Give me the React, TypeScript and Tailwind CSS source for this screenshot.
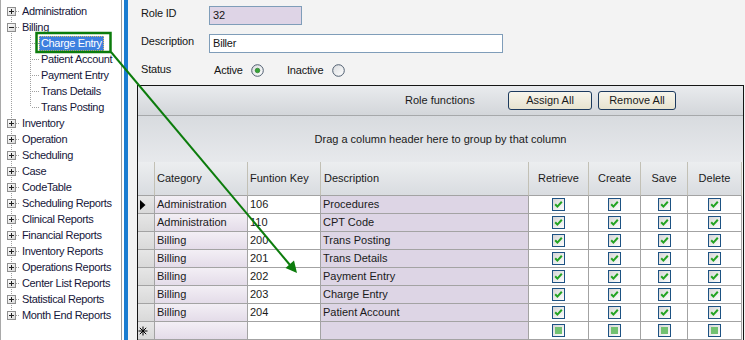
import React from "react";

type Root = { label: string; children?: string[] };

const roots: Root[] = [
  { label: "Administration" },
  {
    label: "Billing",
    children: ["Charge Entry", "Patient Account", "Payment Entry", "Trans Details", "Trans Posting"],
  },
  { label: "Inventory" },
  { label: "Operation" },
  { label: "Scheduling" },
  { label: "Case" },
  { label: "CodeTable" },
  { label: "Scheduling Reports" },
  { label: "Clinical Reports" },
  { label: "Financial Reports" },
  { label: "Inventory Reports" },
  { label: "Operations Reports" },
  { label: "Center List Reports" },
  { label: "Statistical Reports" },
  { label: "Month End Reports" },
];

const DOT = { stroke: "#a0a0a0", strokeDasharray: "1 1", shapeRendering: "crispEdges" as const };

function RootGutter({ first, last, expanded }: { first: boolean; last: boolean; expanded: boolean }) {
  return (
    <svg width={19} height={16} className="shrink-0">
      <defs>
        <linearGradient id="pbox" x1="0" y1="0" x2="1" y2="1">
          <stop offset="0" stopColor="#ffffff" />
          <stop offset="1" stopColor="#d6d6d6" />
        </linearGradient>
      </defs>
      <line x1={10.5} y1={first ? 8 : 0} x2={10.5} y2={last ? 8 : 16} {...DOT} />
      <line x1={15} y1={8.5} x2={19} y2={8.5} {...DOT} />
      <rect x={6.5} y={4.5} width={8} height={8} fill="url(#pbox)" stroke="#8f8f8f" shapeRendering="crispEdges" />
      <line x1={8} y1={8.5} x2={13} y2={8.5} stroke="#222" shapeRendering="crispEdges" />
      {!expanded && <line x1={10.5} y1={6} x2={10.5} y2={11} stroke="#222" shapeRendering="crispEdges" />}
    </svg>
  );
}

function ChildGutter({ last }: { last: boolean }) {
  return (
    <svg width={38} height={16} className="shrink-0">
      <line x1={10.5} y1={0} x2={10.5} y2={16} {...DOT} />
      <line x1={29.5} y1={0} x2={29.5} y2={last ? 8 : 16} {...DOT} />
      <line x1={31} y1={8.5} x2={38} y2={8.5} {...DOT} />
    </svg>
  );
}

function Tree() {
  return (
    <div className="w-[122px] shrink-0 bg-white border-l border-r border-l-[#a9a9a9] border-r-[#9c9c9c] pt-[3px] text-[#16163a] tracking-[-0.35px]">
      {roots.map((r, i) => (
        <React.Fragment key={r.label}>
          <div className="flex items-center h-[16px] whitespace-nowrap">
            <RootGutter first={i === 0} last={i === roots.length - 1} expanded={!!r.children} />
            <span className="h-[15px] leading-[13px] border border-transparent px-[1px]">{r.label}</span>
          </div>
          {r.children?.map((c, j) => (
            <div key={c} className="flex items-center h-[16px] whitespace-nowrap">
              <ChildGutter last={j === r.children!.length - 1} />
              {j === 0 ? (
                <span className="h-[15px] leading-[13px] border border-dotted border-[#e2bf6a] bg-[#3d80df] text-white px-[1px]">
                  {c}
                </span>
              ) : (
                <span className="h-[15px] leading-[13px] border border-transparent px-[1px]">{c}</span>
              )}
            </div>
          ))}
        </React.Fragment>
      ))}
    </div>
  );
}

function Radio({ checked }: { checked?: boolean }) {
  return (
    <svg width={13} height={13} className="shrink-0">
      <defs>
        <linearGradient id="rbg" x1="0" y1="0" x2="1" y2="1">
          <stop offset="0" stopColor="#d9dbde" />
          <stop offset="1" stopColor="#ffffff" />
        </linearGradient>
      </defs>
      <circle cx={6.5} cy={6.5} r={5.8} fill="url(#rbg)" stroke="#4f5e70" />
      {checked && <circle cx={6.5} cy={6.5} r={2.3} fill="#36a336" stroke="#1e6e1e" strokeWidth={0.6} />}
    </svg>
  );
}

function Form() {
  return (
    <div className="pt-[6px] tracking-[-0.2px]">
      <div className="flex items-center h-[19px]">
        <span className="w-[81px] pl-[13px] mb-[4px]">Role ID</span>
        <div className="w-[93px] h-[19px] border border-[#7f9db9] bg-[#ded4e6] pl-[3px] leading-[17px]">32</div>
      </div>
      <div className="flex items-center h-[19px] mt-[9px]">
        <span className="w-[81px] pl-[13px] mb-[4px]">Description</span>
        <div className="w-[294px] h-[19px] border border-[#7f9db9] bg-white pl-[3px] leading-[17px]">Biller</div>
      </div>
      <div className="flex items-center h-[14px] mt-[10px]">
        <span className="w-[86px] pl-[13px] mb-[2px]">Status</span>
        <span className="w-[37px]">Active</span>
        <Radio checked />
        <span className="w-[23px]" />
        <span className="w-[45px]">Inactive</span>
        <Radio />
      </div>
    </div>
  );
}

function CheckBox({ empty }: { empty?: boolean }) {
  return (
    <svg width={13} height={13} className="shrink-0">
      <defs>
        <linearGradient id="cbg" x1="0" y1="0" x2="1" y2="1">
          <stop offset="0" stopColor="#d4d4d4" />
          <stop offset="1" stopColor="#ffffff" />
        </linearGradient>
      </defs>
      <rect x={0.5} y={0.5} width={12} height={12} fill="url(#cbg)" stroke="#1d5283" shapeRendering="crispEdges" />
      {empty ? (
        <rect x={3} y={3} width={7} height={7} fill="#72c272" />
      ) : (
        <path d="M3.2 6.2 L5.4 8.6 L9.8 3.8" stroke="#22a322" strokeWidth={2} fill="none" />
      )}
    </svg>
  );
}

const rows = [
  ["Administration", "106", "Procedures"],
  ["Administration", "110", "CPT Code"],
  ["Billing", "200", "Trans Posting"],
  ["Billing", "201", "Trans Details"],
  ["Billing", "202", "Payment Entry"],
  ["Billing", "203", "Charge Entry"],
  ["Billing", "204", "Patient Account"],
];

const COLS = "grid grid-cols-[17px_93px_73px_208px_60px_52px_47px_54px]";
const CELL = "h-[18px] border-r border-b border-[#a3a3a3] flex items-center";
const HCELL =
  "h-[34px] border-r border-b border-r-[#c2c0b5] border-b-[#a3a3a3] bg-linear-to-b from-[#eceef0] to-[#d9dce0] flex items-center";

function RowHeader({ kind }: { kind?: "current" | "new" }) {
  return (
    <div className={`${CELL} bg-linear-to-b from-[#e6e6e6] to-[#d9d9d9] justify-start`}>
      {kind === "current" && (
        <svg width={10} height={12}>
          <polygon points="2,1 7.5,6 2,11" fill="#000" />
        </svg>
      )}
      {kind === "new" && (
        <svg width={12} height={12}>
          <g stroke="#000" strokeWidth={1}>
            <line x1={5} y1={1.5} x2={5} y2={10.5} />
            <line x1={0.5} y1={6} x2={9.5} y2={6} />
            <line x1={1.8} y1={2.8} x2={8.2} y2={9.2} />
            <line x1={8.2} y1={2.8} x2={1.8} y2={9.2} />
          </g>
        </svg>
      )}
    </div>
  );
}

function Grid() {
  return (
    <div className="ml-[9px] mt-[8px] w-[607px] flex-1 border border-[#151515] bg-[#f3f3f3] flex flex-col text-[#1a1a1a] tracking-normal">
      <div className="h-[30px] shrink-0 flex items-center border-b border-[#a6a8aa] bg-linear-to-b from-[#e9ebee] to-[#d3d6da]">
        <span className="w-[267px]" />
        <span className="w-[103px] whitespace-nowrap">Role functions</span>
        <div className="w-[84px] h-[19px] rounded-[3px] border border-[#1c3a5e] bg-linear-to-b from-[#f7f5ec] to-[#e7e3cf] flex items-center justify-center">
          Assign All
        </div>
        <span className="w-[6px]" />
        <div className="w-[78px] h-[19px] rounded-[3px] border border-[#1c3a5e] bg-linear-to-b from-[#f7f5ec] to-[#e7e3cf] flex items-center justify-center">
          Remove All
        </div>
      </div>
      <div className="h-[46px] shrink-0 flex items-center justify-center bg-linear-to-b from-[#d8dbdf] to-[#e7e9ec]">
        Drag a column header here to group by that column
      </div>
      <div className={COLS}>
        <div className={HCELL} />
        <div className={`${HCELL} pl-[2px]`}>Category</div>
        <div className={`${HCELL} pl-[2px]`}>Funtion Key</div>
        <div className={`${HCELL} pl-[3px]`}>Description</div>
        <div className={`${HCELL} justify-center`}>Retrieve</div>
        <div className={`${HCELL} justify-center`}>Create</div>
        <div className={`${HCELL} justify-center`}>Save</div>
        <div className={`${HCELL} justify-center`}>Delete</div>

        {rows.map((r, i) => (
          <React.Fragment key={r[1]}>
            <RowHeader kind={i === 0 ? "current" : undefined} />
            <div className={`${CELL} pl-[2px] bg-linear-to-b from-[#f3eff5] to-[#e4dce9]`}>{r[0]}</div>
            <div className={`${CELL} pl-[2px] bg-white`}>{r[1]}</div>
            <div className={`${CELL} pl-[2px] bg-[#ddd5e5]`}>{r[2]}</div>
            {[0, 1, 2, 3].map((k) => (
              <div key={k} className={`${CELL} bg-white justify-center`}>
                <CheckBox />
              </div>
            ))}
          </React.Fragment>
        ))}
        <RowHeader kind="new" />
        <div className={`${CELL} bg-linear-to-b from-[#f3eff5] to-[#e4dce9]`} />
        <div className={`${CELL} bg-white`} />
        <div className={`${CELL} bg-[#ddd5e5]`} />
        {[0, 1, 2, 3].map((k) => (
          <div key={k} className={`${CELL} bg-white justify-center`}>
            <CheckBox empty />
          </div>
        ))}
      </div>
    </div>
  );
}

function Overlay() {
  return (
    <svg className="absolute left-0 top-0 pointer-events-none" width={745} height={340}>
      <rect x={36.5} y={33} width={74} height={19} fill="none" stroke="#0c7c0c" strokeWidth={2.5} />
      <line x1={111} y1={52} x2={290} y2={265} stroke="#0c7c0c" strokeWidth={2} />
      <polygon points="297,273 285.5,268 294,260.5" fill="#0c7c0c" />
    </svg>
  );
}

export default function App() {
  return (
    <div className="relative w-[745px] h-[340px] overflow-hidden flex bg-[#f3f3f3] font-['Liberation_Sans',Arial,sans-serif] text-[11px] text-[#151515]">
      <Tree />
      <div className="w-[2px] shrink-0 bg-white" />
      <div className="w-[4px] shrink-0 bg-[#1a7cd0]" />
      <div className="flex-1 flex flex-col">
        <Form />
        <Grid />
      </div>
      <Overlay />
    </div>
  );
}
